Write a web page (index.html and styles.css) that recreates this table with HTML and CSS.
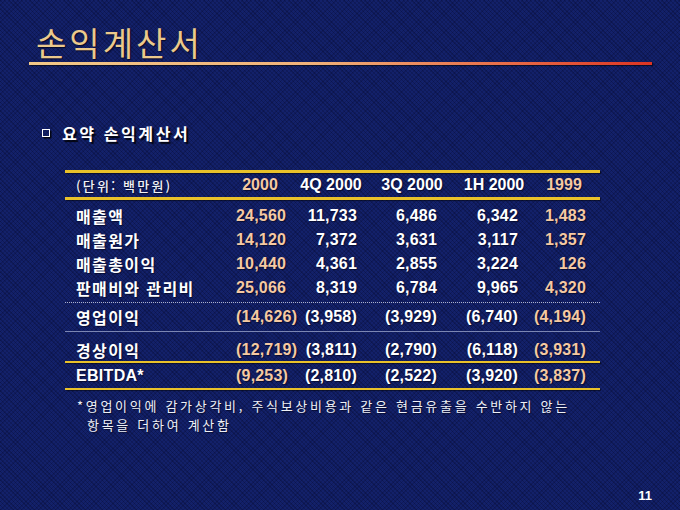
FILE: index.html
```html
<!DOCTYPE html>
<html lang="ko">
<head>
<meta charset="utf-8">
<link rel="stylesheet" href="styles.css">
</head>
<body>
<div class="slide">
  <h1 class="title">손익계산서</h1>
  <div class="rule"></div>

  <div class="bullet">
    <span class="box"></span>
    <span class="bullet-text">요약 손익계산서</span>
  </div>

  <div class="table">
    <div class="gold"></div>
    <div class="row head">
      <div class="label unit">(단위: 백만원)</div>
      <div class="h c1 hl"><span>2000</span></div>
      <div class="h c2"><span>4Q 2000</span></div>
      <div class="h c3"><span>3Q 2000</span></div>
      <div class="h c4"><span>1H 2000</span></div>
      <div class="h c5 hl"><span>1999</span></div>
    </div>
    <div class="gold"></div>

    <div class="group">
      <div class="row">
        <div class="label">매출액</div>
        <div class="n hl">24,560</div><div class="n">11,733</div><div class="n">6,486</div><div class="n">6,342</div><div class="n hl">1,483</div>
      </div>
      <div class="row">
        <div class="label">매출원가</div>
        <div class="n hl">14,120</div><div class="n">7,372</div><div class="n">3,631</div><div class="n">3,117</div><div class="n hl">1,357</div>
      </div>
      <div class="row">
        <div class="label">매출총이익</div>
        <div class="n hl">10,440</div><div class="n">4,361</div><div class="n">2,855</div><div class="n">3,224</div><div class="n hl">126</div>
      </div>
      <div class="row">
        <div class="label">판매비와 관리비</div>
        <div class="n hl">25,066</div><div class="n">8,319</div><div class="n">6,784</div><div class="n">9,965</div><div class="n hl">4,320</div>
      </div>
    </div>
    <div class="dotted"></div>

    <div class="row op">
      <div class="label">영업이익</div>
      <div class="n hl">(14,626)</div><div class="n">(3,958)</div><div class="n">(3,929)</div><div class="n">(6,740)</div><div class="n hl">(4,194)</div>
    </div>
    <div class="thin"></div>

    <div class="row ord">
      <div class="label">경상이익</div>
      <div class="n hl">(12,719)</div><div class="n">(3,811)</div><div class="n">(2,790)</div><div class="n">(6,118)</div><div class="n hl">(3,931)</div>
    </div>
    <div class="gold thin-gold"></div>
    <div class="row ebitda">
      <div class="label latin">EBITDA*</div>
      <div class="n hl">(9,253)</div><div class="n">(2,810)</div><div class="n">(2,522)</div><div class="n">(3,920)</div><div class="n hl">(3,837)</div>
    </div>
    <div class="gold thin-gold"></div>
  </div>

  <div class="note">
    <div class="note-line">*영업이익에 감가상각비, 주식보상비용과 같은 현금유출을 수반하지 않는</div>
    <div class="note-line indent">항목을 더하여 계산함</div>
  </div>

  <div class="page">11</div>
</div>
</body>
</html>
```

FILE: styles.css
```css
html, body {
  margin: 0;
  padding: 0;
}

.slide {
  width: 680px;
  height: 510px;
  box-sizing: border-box;
  display: flex;
  flex-direction: column;
  overflow: hidden;
  background-color: #13216a;
  background-image:
    repeating-linear-gradient(45deg, rgba(0, 0, 20, 0.22) 0 1px, transparent 1px 3px),
    repeating-linear-gradient(-45deg, rgba(0, 0, 30, 0.18) 0 1px, transparent 1px 3px);
  font-family: "Noto Sans CJK KR", "Liberation Sans", sans-serif;
  color: #ffffff;
}

.title {
  margin: 0;
  padding: 23px 0 0 36px;
  font-size: 33px;
  font-weight: 400;
  line-height: 39px;
  letter-spacing: 3px;
  color: #ebc98c;
  text-shadow: 1px 1px 1px rgba(0, 0, 20, 0.7);
}

.rule {
  margin: 0 0 0 29px;
  width: 623px;
  height: 3px;
  background: linear-gradient(90deg, #f1c887 0%, #f0b27a 45%, #e8704a 75%, #dc3422 100%);
  box-shadow: 1px 1px 1px rgba(0, 0, 0, 0.6);
}

.bullet {
  display: flex;
  align-items: center;
  gap: 12px;
  margin: 58px 0 0 42px;
}

.box {
  width: 6px;
  height: 6px;
  border: 1.5px solid #ffffff;
  box-shadow: 1.5px 1.5px 0 rgba(0, 0, 0, 0.8);
}

.bullet-text {
  font-size: 16px;
  font-weight: 700;
  letter-spacing: 2.6px;
  line-height: 20px;
  text-shadow: 2px 2px 1px rgba(0, 0, 0, 0.85);
}

.table {
  margin: 27px 0 0 65px;
  width: 535px;
}

.gold {
  height: 3px;
  background: #e9c12a;
  box-shadow: 1px 1px 1px rgba(0, 0, 0, 0.5);
}

.thin-gold {
  height: 2px;
}

.row {
  display: grid;
  grid-template-columns: 160px 48px 73px 80px 81px 68px;
  padding: 0 14px 0 11px;
  height: 24px;
  align-items: center;
  font-family: "Liberation Sans", "Noto Sans CJK KR", sans-serif;
  font-weight: 700;
  font-size: 16px;
  text-shadow: 1px 1px 1px rgba(0, 0, 20, 0.6);
}

.label {
  font-family: "Noto Sans CJK KR", sans-serif;
  font-weight: 700;
  font-size: 16px;
  letter-spacing: 1.4px;
  white-space: nowrap;
}

.label.latin {
  font-family: "Liberation Sans", sans-serif;
  font-size: 16px;
  letter-spacing: 0.3px;
}

.unit {
  font-size: 13px;
  font-weight: 500;
  letter-spacing: 2.2px;
  color: #f2f2f6;
}

.h {
  display: flex;
  justify-content: center;
  white-space: nowrap;
}

.c2 { padding-left: 21px; }
.c3 { padding-left: 30px; }
.c4 { padding-left: 33px; }
.c5 { padding-left: 24px; }

.n {
  text-align: right;
  white-space: nowrap;
  letter-spacing: 0.2px;
}

.hl {
  color: #f5c9a2;
}

.group {
  padding-top: 4px;
}

.dotted {
  margin-top: 2px;
  border-top: 1px dotted rgba(210, 215, 235, 0.8);
}

.op {
  height: 28px;
}

.thin {
  height: 1px;
  background: rgba(170, 180, 215, 0.7);
}

.ord {
  height: 29px;
  padding-top: 6px;
  box-sizing: border-box;
  align-items: center;
}

.ebitda {
  height: 25px;
}

.note {
  margin: 6px 0 0 77px;
  display: flex;
  flex-direction: column;
  font-size: 13px;
  line-height: 19px;
  letter-spacing: 2.7px;
  color: #eef0f6;
  text-shadow: 1px 1px 1px rgba(0, 0, 20, 0.6);
}

.note-line {
  height: 19px;
  white-space: nowrap;
}

.note-line.indent {
  padding-left: 10px;
}

.page {
  margin-top: auto;
  align-self: flex-end;
  padding: 0 28px 6px 0;
  font-family: "Liberation Sans", sans-serif;
  font-weight: 700;
  font-size: 13px;
  line-height: 16px;
}
```
